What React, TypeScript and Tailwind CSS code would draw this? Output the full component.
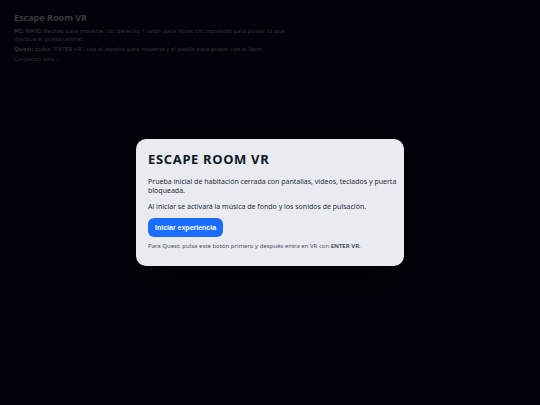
import { useState } from "react";

const Instructions = () => {
  return (
    <section className="w-[54%] pt-3 pl-3.5 text-[6px] leading-2 text-[#323236]">
      <h1 className="text-[9px] leading-3 font-bold text-[#3a3a3d]">Escape Room VR</h1>
      <p className="mt-[3px]">
        <b>PC:</b> WASD/flechas para moverte, clic derecho + ratón para mirar, clic izquierdo para pulsar lo que marque el punto central.
      </p>
      <p className="mt-0.5">
        <b>Quest:</b> pulsa “ENTER VR”, usa el joystick para moverte y el gatillo para pulsar con el láser.
      </p>
      <p className="mt-0.5 text-[#2a2a2e]">Cargando sala...</p>
    </section>
  );
};

const App = () => {
  const [started, setStarted] = useState(false);

  return (
    <div className="relative min-h-screen bg-[#02020b] font-['Noto_Sans',sans-serif]">
      <Instructions />

      {!started && (
        <div className="absolute inset-0 flex items-center justify-center">
          <div
            role="dialog"
            aria-labelledby="start-title"
            className="w-1/2 max-w-[268px] rounded-[10px] bg-[#e9ebf0] pt-3 pr-1.5 pb-[15px] pl-3 text-[7px] leading-[9px] text-[#252b3a] shadow-[0_10px_40px_#000000]"
          >
            <h2 id="start-title" className="text-[13px] leading-4 font-bold tracking-wider text-[#111827]">
              ESCAPE ROOM VR
            </h2>
            <p className="mt-2.5">
              Prueba inicial de habitación cerrada con pantallas, vídeos, teclados y puerta bloqueada.
            </p>
            <p className="mt-[7px]">Al iniciar se activará la música de fondo y los sonidos de pulsación.</p>
            <button
              type="button"
              onClick={() => setStarted(true)}
              className="mt-[7px] block rounded-md bg-[#1a6dff] px-[7px] py-[5px] font-['Liberation_Sans',sans-serif] font-bold text-white"
            >
              Iniciar experiencia
            </button>
            <p className="mt-[5px] text-[6px] text-[#4b5160]">
              Para Quest: pulsa este botón primero y después entra en VR con <b>ENTER VR</b>.
            </p>
          </div>
        </div>
      )}
    </div>
  );
};

export default App;
